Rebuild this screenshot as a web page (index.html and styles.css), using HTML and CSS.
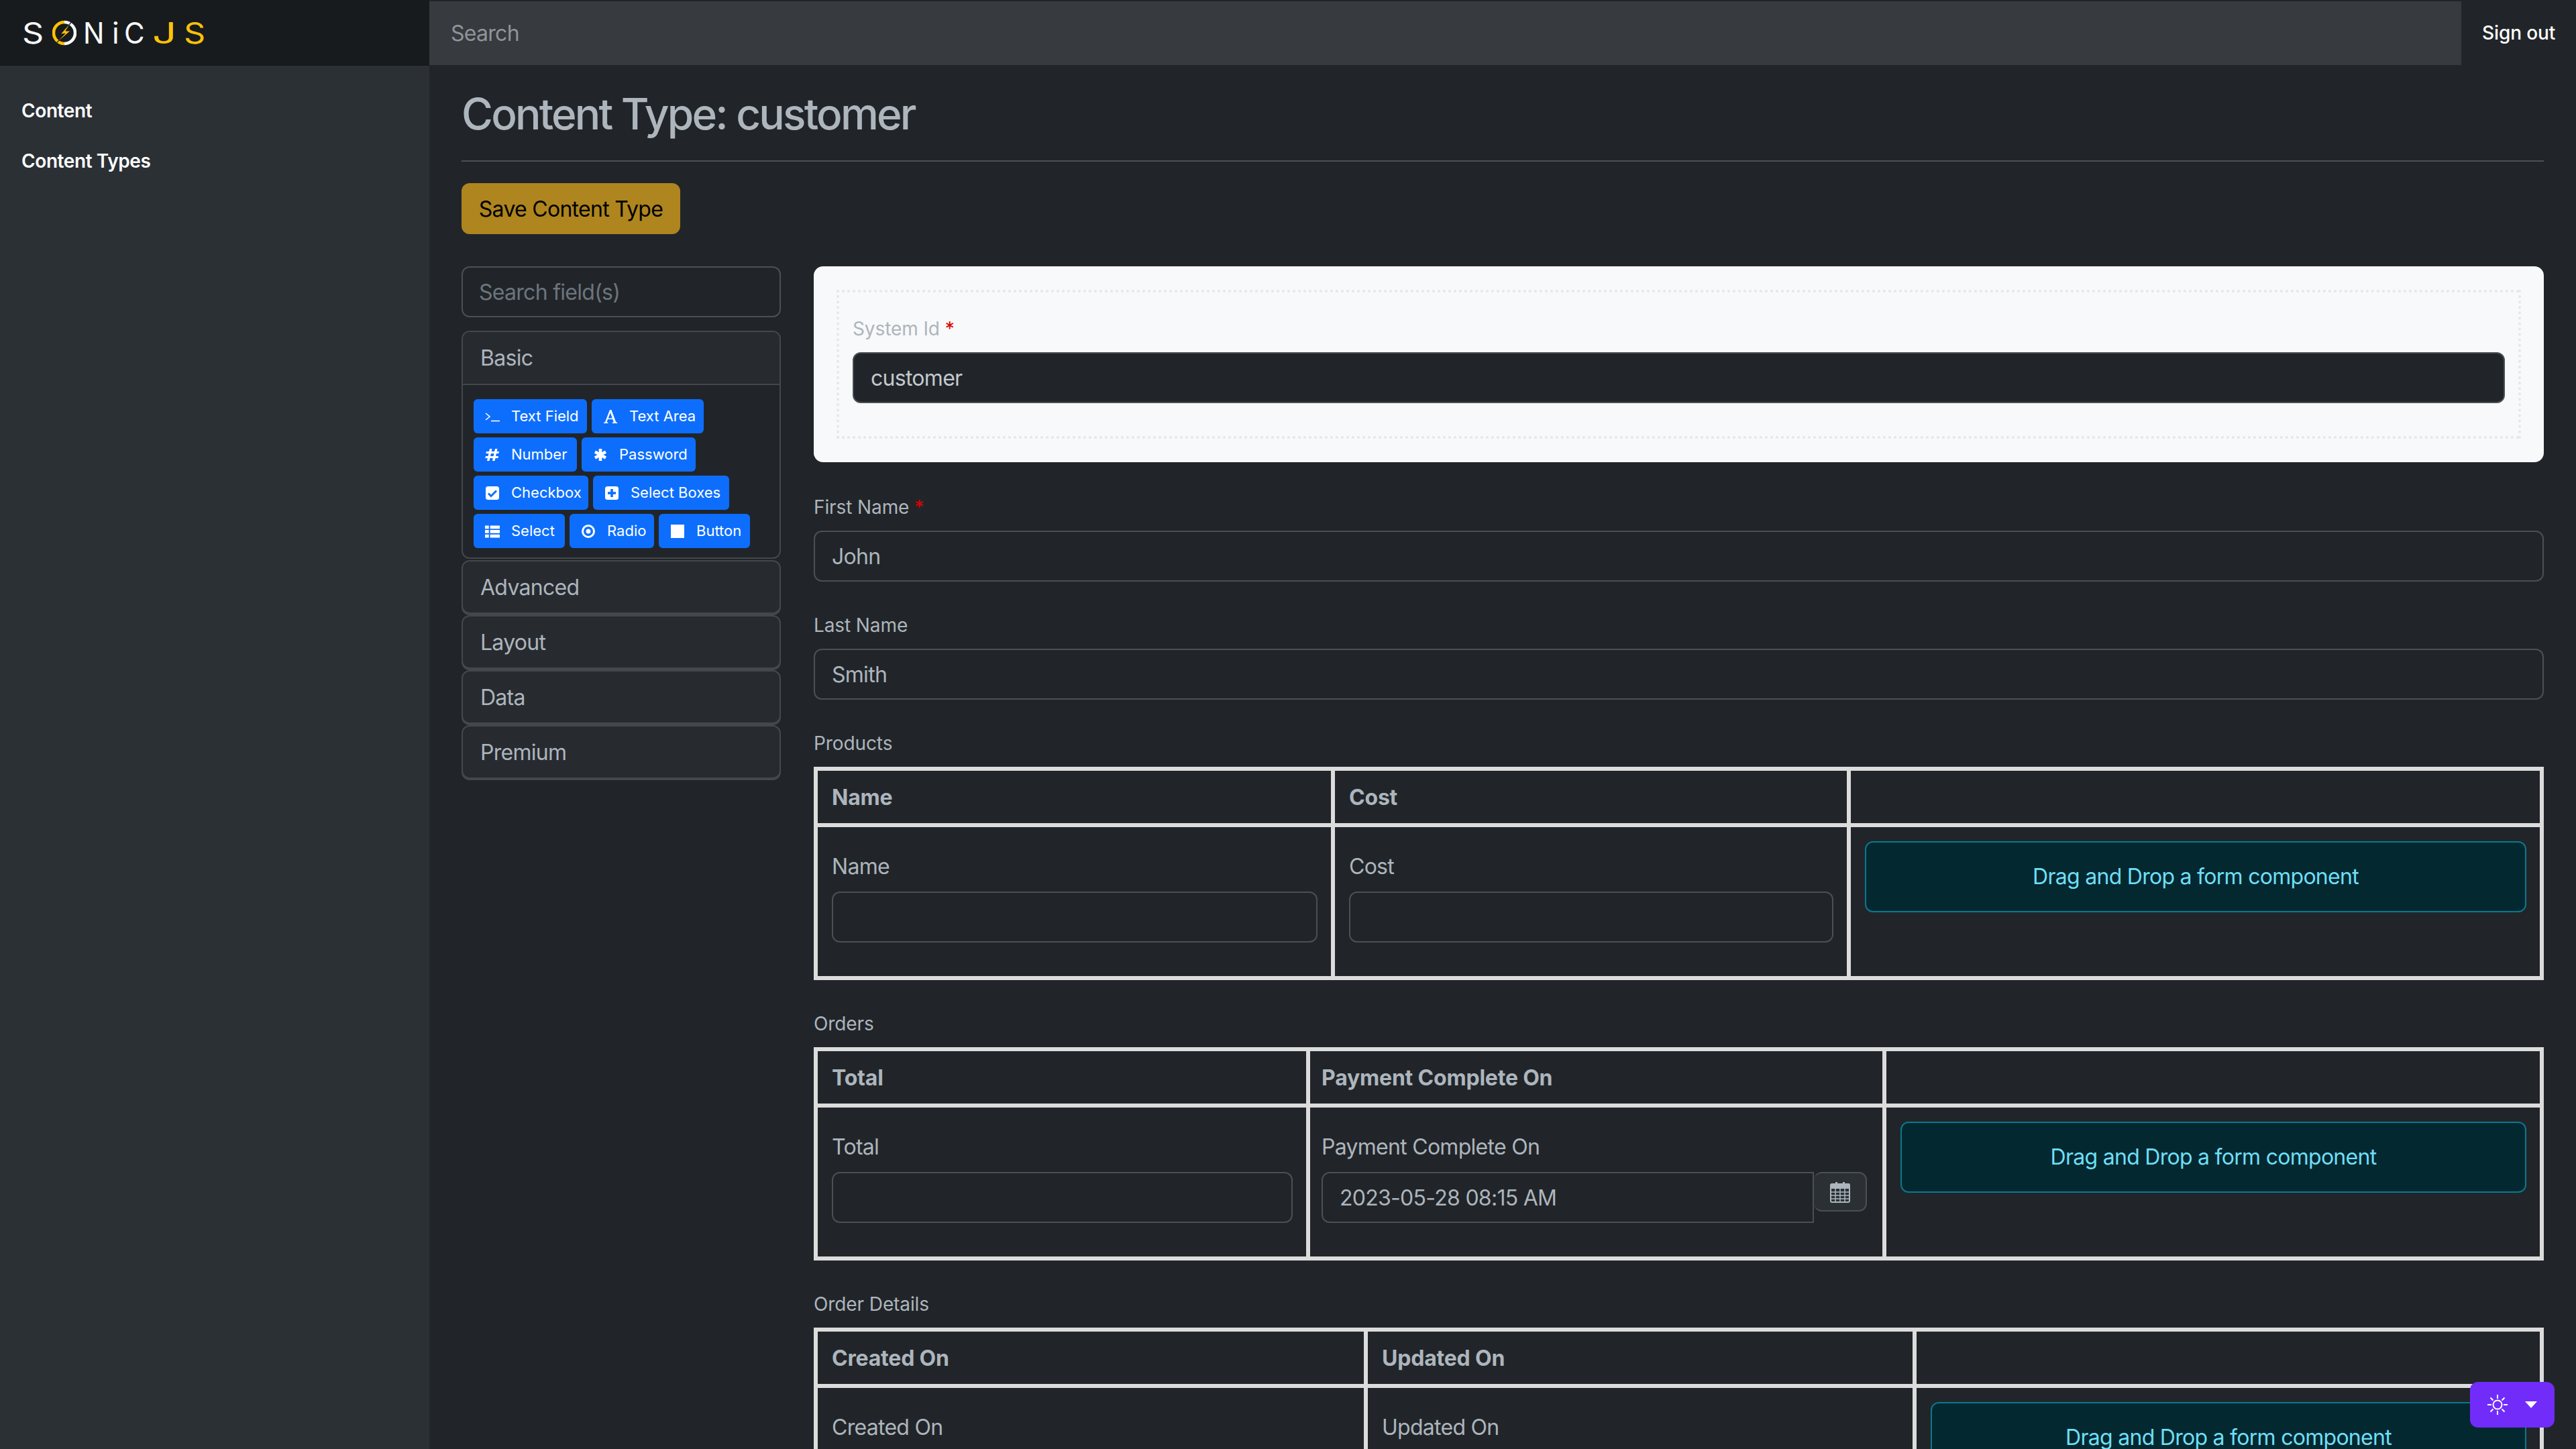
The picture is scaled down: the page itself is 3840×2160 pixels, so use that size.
FILE: index.html
```html
<!DOCTYPE html>
<html lang="en">
<head>
  <meta charset="UTF-8">
  <title>Content Type: customer | SonicJs</title>
  <link rel="stylesheet" href="styles.css">
</head>
<body>

  <!-- Top bar -->
  <header class="topbar">
    <div class="brand">
      <span class="ltr ltr-s">S</span>
      <svg class="brand-bolt" viewBox="0 0 36 38" width="36" height="38">
        <path d="M18 3 A16 16 0 0 0 18 35" fill="none" stroke="#ffc107" stroke-width="4.500"/>
        <path d="M18 3 A16 16 0 0 1 18 35" fill="none" stroke="#f8f9fa" stroke-width="4.500"/>
        <path d="M29 2 L12 21 L19 20 L4 36 L27 16 L20 16 L25 8 Z" fill="#ffc107" stroke="#171b1e" stroke-width="1"/>
      </svg>
      <span class="ltr ltr-n">N</span>
      <span class="ltr ltr-i">i</span>
      <span class="ltr ltr-c">C</span>
      <span class="ltr ltr-j">J</span>
      <span class="ltr ltr-s2">S</span>
    </div>
    <div class="topsearch">Search</div>
    <a class="signout">Sign out</a>
  </header>

  <div class="layout">
    <!-- Sidebar -->
    <nav class="sidebar">
      <a class="navlink">Content</a>
      <a class="navlink">Content Types</a>
    </nav>

    <!-- Main -->
    <main class="main">
      <h2 class="page-title">Content Type: customer</h2>
      <button class="btn-save">Save Content Type</button>

      <div class="builder">
        <!-- Field palette -->
        <aside class="palette">
          <div class="field-search">Search field(s)</div>
          <div class="card card-open">
            <div class="card-head">Basic</div>
            <div class="card-body">
              <div class="btn-row">
                <span class="chip chip-a">
                  <svg class="ico" viewBox="0 0 22 16"><path d="M1 3l6 5-6 5" fill="none" stroke="#fff" stroke-width="1.6"/><path d="M9 14.5h13" stroke="#fff" stroke-width="1.6"/></svg>Text Field</span>
                <span class="chip chip-b">
                  <svg class="ico" viewBox="0 0 22 22"><path d="M1 21v-1.3l2-.5L10 1h2.4l6.800 18.200 2 .5V21h-7.400v-1.300l2-.4-1.500-4.300H7l-1.600 4.300 2 .4V21zM7.700 13.500h6.100L10.800 5.300z" fill="#fff"/></svg>Text Area</span>
              </div>
              <div class="btn-row">
                <span class="chip chip-c">
                  <svg class="ico" viewBox="0 0 22 20"><path d="M7 1h3.500l-4 18H3zM15 1h3.500l-4 18H11zM2 5h19l-.7 3H1.300zM1 12h19l-.7 3H.3z" fill="#fff"/></svg>Number</span>
                <span class="chip chip-d">
                  <svg class="ico" viewBox="0 0 22 22"><path d="M11 2v18M3 6.500l16 9M19 6.500l-16 9" stroke="#fff" stroke-width="4.600" fill="none"/></svg>Password</span>
              </div>
              <div class="btn-row">
                <span class="chip chip-e">
                  <svg class="ico" viewBox="0 0 22 22"><rect x="1" y="1" width="20" height="20" rx="3.500" fill="#fff"/><path d="M5 11.500l4 4 8-8" fill="none" stroke="#0d6efd" stroke-width="3"/></svg>Checkbox</span>
                <span class="chip chip-f">
                  <svg class="ico" viewBox="0 0 22 22"><rect x="1" y="1" width="20" height="20" rx="3.500" fill="#fff"/><path d="M11 5v12M5 11h12" stroke="#0d6efd" stroke-width="3.600"/></svg>Select Boxes</span>
              </div>
              <div class="btn-row">
                <span class="chip chip-g">
                  <svg class="ico" viewBox="0 0 23 20"><path d="M0 1h6v5H0zM8 1h15v5H8zM0 8h6v5H0zM8 8h15v5H8zM0 15h6v5H0zM8 15h15v5H8z" fill="#fff"/></svg>Select</span>
                <span class="chip chip-h">
                  <svg class="ico" viewBox="0 0 22 22"><circle cx="11" cy="11" r="8.500" fill="none" stroke="#fff" stroke-width="3"/><circle cx="11" cy="11" r="3.500" fill="#fff"/></svg>Radio</span>
                <span class="chip chip-i">
                  <svg class="ico" viewBox="0 0 22 22"><rect x="1" y="1" width="20" height="20" fill="#fff"/></svg>Button</span>
              </div>
            </div>
          </div>
          <div class="card card-closed">Advanced</div>
          <div class="card card-closed">Layout</div>
          <div class="card card-closed">Data</div>
          <div class="card card-closed">Premium</div>
        </aside>

        <!-- Form -->
        <section class="form">
          <div class="panel">
            <div class="panel-dots">
              <label class="lbl lbl-light">System Id <span class="req">*</span></label>
              <div class="input input-dark">customer</div>
            </div>
          </div>

          <div class="group group-first">
            <label class="lbl">First Name <span class="req">*</span></label>
            <div class="input">John</div>
          </div>
          <div class="group">
            <label class="lbl">Last Name</label>
            <div class="input">Smith</div>
          </div>

          <div class="group">
            <label class="lbl">Products</label>
            <table class="grid grid-products">
              <tr><th>Name</th><th>Cost</th><th></th></tr>
              <tr>
                <td><div class="cell-lbl">Name</div><div class="input"></div></td>
                <td><div class="cell-lbl">Cost</div><div class="input"></div></td>
                <td class="drop-cell"><div class="drop">Drag and Drop a form component</div></td>
              </tr>
            </table>
          </div>

          <div class="group">
            <label class="lbl">Orders</label>
            <table class="grid grid-orders">
              <tr><th>Total</th><th class="th-tight">Payment Complete On</th><th></th></tr>
              <tr>
                <td><div class="cell-lbl">Total</div><div class="input"></div></td>
                <td class="td-tight">
                  <div class="cell-lbl">Payment Complete On</div>
                  <div class="date-group">
                    <div class="input input-date">2023-05-28 08:15 AM</div>
                    <div class="date-btn">
                      <svg viewBox="0 0 28 32" width="30" height="32"><path d="M7 1h3v5H7zM18 1h3v5h-3z" fill="#adb5bd"/><path d="M3 4h24a1.500 1.500 0 0 1 1 1.500V29a2 2 0 0 1-2 2H2a2 2 0 0 1-2-2V5.500A1.500 1.500 0 0 1 2 4z" fill="none" stroke="#adb5bd" stroke-width="2"/><path d="M1 4h26v7H1z" fill="#adb5bd"/><path d="M1 16h26M1 21h26M1 26h26M7 11v19M14 11v19M21 11v19" stroke="#adb5bd" stroke-width="1.500"/></svg>
                    </div>
                  </div>
                </td>
                <td class="drop-cell"><div class="drop">Drag and Drop a form component</div></td>
              </tr>
            </table>
          </div>

          <div class="group">
            <label class="lbl">Order Details</label>
            <table class="grid grid-details">
              <tr><th>Created On</th><th>Updated On</th><th></th></tr>
              <tr>
                <td><div class="cell-lbl">Created On</div><div class="input"></div></td>
                <td><div class="cell-lbl">Updated On</div><div class="input"></div></td>
                <td class="drop-cell"><div class="drop">Drag and Drop a form component</div></td>
              </tr>
            </table>
          </div>
        </section>
      </div>
    </main>
  </div>

  <!-- Theme toggle -->
  <div class="theme">
    <svg viewBox="0 0 32 32" width="32" height="32" fill="none" stroke="#fff" stroke-width="2">
      <ellipse cx="16" cy="16" rx="6.500" ry="6.500"/>
      <path d="M16 1v6M16 25v6M1 16h6M25 16h6M5.500 5.500l4 4M22.500 22.500l4 4M5.500 26.500l4-4M22.500 9.500l4-4"/>
    </svg>
    <span class="caret"></span>
  </div>

</body>
</html>
```

FILE: styles.css
```css
* { margin: 0; padding: 0; box-sizing: border-box; }
html, body { height: 2160px; overflow: hidden; }
body {
  font-family: Inter, "Liberation Sans", sans-serif;
  font-size: 32px;
  line-height: 1.5;
  letter-spacing: -0.72px;
  background: #212529;
  color: #adb5bd;
  position: relative;
}

/* top bar */
.topbar {
  display: flex;
  height: 98px;
  background: #212529;
}
.brand {
  width: 640px;
  background: #171b1e;
  display: flex;
  align-items: center;
  padding-left: 33px;
  font-size: 44px;
  font-weight: 400;
  color: #f8f9fa;
  line-height: 1;
  letter-spacing: 0;
}
.ltr { display: block; transform-origin: left center; }
.ltr-s { width: 45px; transform: scaleX(1.14); }
.brand-bolt { width: 36px; flex-shrink: 0; }
.ltr-n { margin-left: 10px; width: 43px; transform: scaleX(.95); }
.ltr-i { width: 18px; }
.ltr-c { width: 42px; transform: scaleX(.95); }
.ltr-j { width: 47px; color: #ffc107; transform: scaleX(1.45); }
.ltr-s2 { color: #ffc107; transform: scaleX(1.14); }
.topsearch {
  flex: 1;
  margin-top: 2px;
  margin-bottom: 1px;
  padding-left: 32px;
  background: #373a3e;
  color: #8f9499;
  display: flex;
  align-items: center;
}
.signout {
  width: 171px;
  padding-left: 31px;
  display: flex;
  align-items: center;
  font-size: 28px;
  font-weight: 500;
  letter-spacing: -0.1px;
  color: #fff;
}

/* page frame */
.layout {
  display: flex;
  height: 2062px;
}
.sidebar {
  width: 640px;
  background: #2b3035;
  padding-top: 46px;
  display: flex;
  flex-direction: column;
  gap: 33px;
}
.navlink {
  padding-left: 32px;
  font-size: 28px;
  line-height: 42px;
  font-weight: 600;
  letter-spacing: -0.4px;
  color: #fff;
}
.main {
  flex: 1;
  padding: 33px 48px 0 48px;
}
.page-title {
  font-size: 64px;
  font-weight: 500;
  line-height: 77px;
  letter-spacing: -2.8px;
  padding-bottom: 31px;
  border-bottom: 2px solid #495057;
  color: #adb5bd;
}
.btn-save {
  display: block;
  margin: 32px 0 48px;
  width: 326px;
  height: 76px;
  padding-top: 2px;
  border: 0;
  border-radius: 12px;
  background: #ae851e;
  color: #000;
  font: inherit;
  letter-spacing: inherit;
}
.builder {
  display: flex;
  gap: 49px;
}

/* palette */
.palette { width: 476px; flex-shrink: 0; }
.field-search {
  height: 76px;
  border: 2px solid #495057;
  border-radius: 12px;
  padding-left: 24px;
  line-height: 74px;
  color: #6c757d;
}
.card {
  border: 2px solid #43484e;
  border-radius: 12px;
}
.card-open { margin-top: 20px; }
.card-head {
  height: 79px;
  padding-left: 26px;
  line-height: 77px;
  background: #272b30;
  border-bottom: 2px solid #43484e;
  border-radius: 10px 10px 0 0;
}
.card-body {
  padding: 21px 16px 14px;
  display: flex;
  flex-direction: column;
  gap: 6px;
}
.btn-row { display: flex; gap: 7px; }
.chip {
  height: 51px;
  display: flex;
  align-items: center;
  gap: 17px;
  padding: 0 12px 0 17px;
  background: #0d6efd;
  border-radius: 6px;
  color: #fff;
  font-size: 22px;
  letter-spacing: 0;
  white-space: nowrap;
}
.ico { width: 22px; height: 22px; flex-shrink: 0; }
.chip-a { width: 169px; }
.chip-b { width: 167px; }
.chip-c { width: 154px; }
.chip-d { width: 170px; }
.chip-e { width: 171px; }
.chip-f { width: 203px; }
.chip-g { width: 136px; }
.chip-h { width: 126px; }
.chip-i { width: 136px; }
.card-closed {
  height: 80px;
  margin-top: 2px;
  padding-left: 26px;
  line-height: 78px;
  background: #272b30;
  box-shadow: 0 2px 0 #43484e;
}

/* form */
.form { flex: 1; min-width: 0; }
.panel {
  height: 292px;
  padding: 35px 34px;
  background: #f8f9fa;
  border-radius: 14px;
}
.panel-dots {
  height: 222px;
  padding: 33px 20px 0;
  border: 4px dotted #e4e7ea;
}
.lbl {
  display: block;
  font-size: 28px;
  line-height: 42px;
  letter-spacing: -0.1px;
  margin-bottom: 14px;
  color: #adb5bd;
}
.lbl-light { color: #adb5bd; }
.req { color: #e00000; }
.input {
  height: 76px;
  padding-left: 25px;
  border: 2px solid #495057;
  border-radius: 12px;
  line-height: 74px;
  color: #adb5bd;
}
.input-dark {
  background: #212529;
  color: #c3c9cf;
}
.group { margin-top: 44px; }
.group-first { margin-top: 46px; }

/* nested form grids */
.grid {
  width: 100%;
  table-layout: fixed;
  border-collapse: separate;
  border-spacing: 0;
  border: 6px solid #dcdcdc;
}
.grid th, .grid td {
  border-right: 6px solid #dcdcdc;
  text-align: left;
  vertical-align: top;
  padding-left: 21px;
  padding-right: 20px;
}
.grid th:last-child, .grid td:last-child { border-right: 0; }
.grid th {
  height: 84px;
  padding-top: 2px;
  line-height: 76px;
  font-weight: 700;
  letter-spacing: -0.2px;
  border-bottom: 6px solid #dcdcdc;
}
.grid td {
  height: 222px;
  padding-top: 35px;
}
.grid-products th:nth-child(1) { width: 771px; }
.grid-products th:nth-child(2) { width: 769px; }
.grid-orders th:nth-child(1) { width: 734px; }
.grid-orders th:nth-child(2) { width: 859px; }
.grid-details th:nth-child(1) { width: 820px; }
.grid-details th:nth-child(2) { width: 818px; }
.grid .th-tight, .grid .td-tight { padding-left: 17px; padding-right: 23px; }
.cell-lbl {
  line-height: 48px;
  margin-bottom: 13px;
}
.grid .drop-cell { padding-top: 21px; padding-right: 20px; }
.drop {
  height: 106px;
  border: 2px solid #087990;
  border-radius: 12px;
  background: #032830;
  color: #6edff6;
  display: flex;
  align-items: center;
  justify-content: center;
}
.date-group { display: flex; align-items: flex-start; }
.input-date {
  flex: 1;
  border-radius: 12px 0 0 12px;
}
.date-btn {
  width: 79px;
  height: 59px;
  border: 2px solid #495057;
  border-left: 0;
  border-radius: 12px;
  background: #2b3035;
  display: flex;
  align-items: center;
  justify-content: center;
}

/* floating theme toggle */
.theme {
  position: absolute;
  left: 3682px;
  top: 2060px;
  width: 126px;
  height: 68px;
  background: #712cf9;
  border-radius: 12px;
  display: flex;
  align-items: center;
  gap: 25px;
  padding-left: 25px;
}
.caret {
  width: 0;
  height: 0;
  border-left: 9px solid transparent;
  border-right: 9px solid transparent;
  border-top: 10px solid #fff;
}
```
